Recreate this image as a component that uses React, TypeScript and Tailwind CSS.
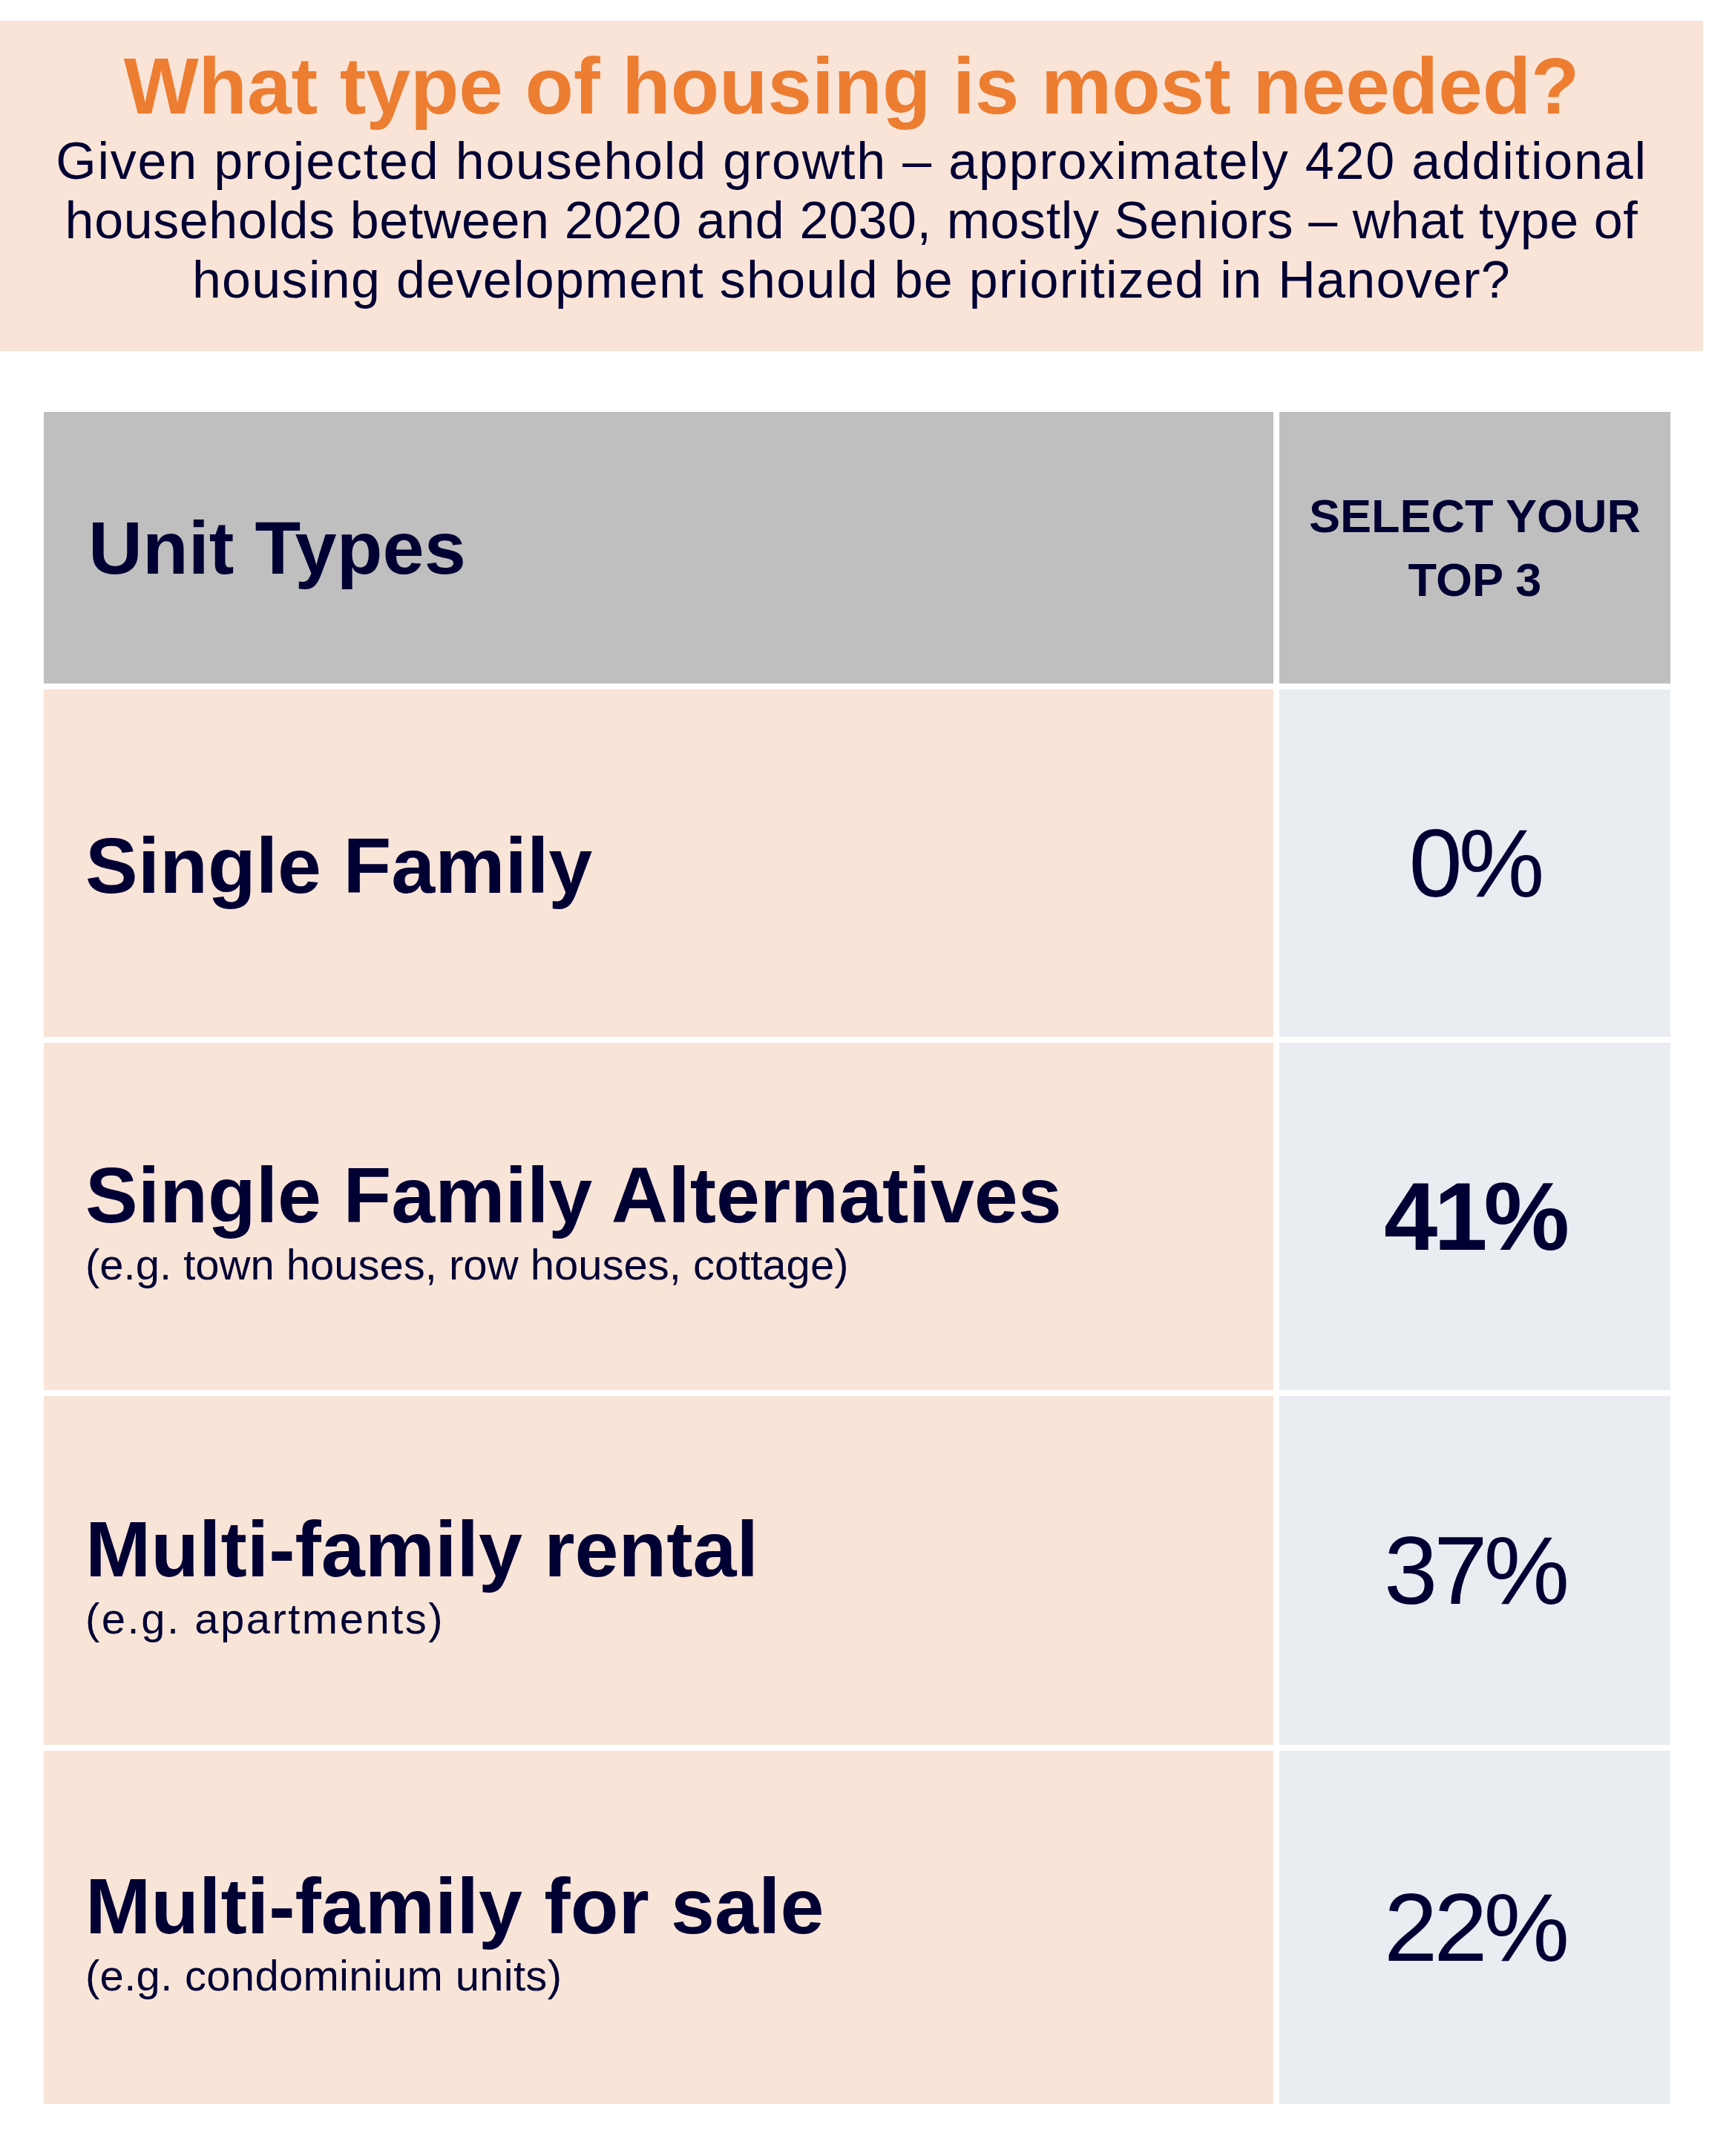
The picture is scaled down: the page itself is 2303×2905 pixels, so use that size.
import React from "react";

type Row = {
  title: string;
  sub: string | null;
  subCls: string;
  pct: string;
  bold: boolean;
  h: string;
};

const rows: Row[] = [
  { title: "Single Family", sub: null, subCls: "", pct: "0%", bold: false, h: "h-[468px]" },
  {
    title: "Single Family Alternatives",
    sub: "(e.g. town houses, row houses, cottage)",
    subCls: "tracking-[0px]",
    pct: "41%",
    bold: true,
    h: "h-[468px]",
  },
  {
    title: "Multi-family rental",
    sub: "(e.g. apartments)",
    subCls: "tracking-[2.5px]",
    pct: "37%",
    bold: false,
    h: "h-[470px]",
  },
  {
    title: "Multi-family for sale",
    sub: "(e.g. condominium units)",
    subCls: "tracking-[0.3px]",
    pct: "22%",
    bold: false,
    h: "h-[476px]",
  },
];

export default function App() {
  return (
    <div className="w-[2303px] h-[2905px] bg-white pt-[28px] font-['Liberation_Sans',Arial,sans-serif] text-[#000033]">
      <div className="w-[2295px] h-[445px] bg-[#F9E4D7] pt-[35px] text-center">
        <h1 className="text-[107px] leading-[107px] font-bold text-[#ED7D31]">
          What type of housing is most needed?
        </h1>
        <p className="mt-[7px] text-[70px] leading-[80px]">
          <span className="tracking-[1.8px]">Given projected household growth – approximately 420 additional</span>
          <br />
          <span className="tracking-[0.6px]">households between 2020 and 2030, mostly Seniors – what type of</span>
          <br />
          <span className="tracking-[1.3px]">housing development should be prioritized in Hanover?</span>
        </p>
      </div>

      <div className="ml-[59px] mt-[82px] w-[2192px] grid grid-cols-[1657px_527px] gap-[8px]">
        <div className="h-[366px] bg-[#BFBFBF] flex items-center pl-[60px]">
          <span className="text-[101px] leading-[106px] font-bold">Unit Types</span>
        </div>
        <div className="h-[366px] bg-[#BFBFBF] flex items-center justify-center text-center">
          <span className="text-[63px] leading-[86px] font-bold">
            SELECT YOUR
            <br />
            TOP 3
          </span>
        </div>

        {rows.map((r) => (
          <React.Fragment key={r.title}>
            <div
              className={`${r.h} bg-[#F9E4D8] flex flex-col justify-center pl-[56px] ${
                r.sub ? "pt-[14px]" : "pt-[6px]"
              }`}
            >
              <div className="text-[106px] leading-[106px] font-bold">{r.title}</div>
              {r.sub && <div className={`mt-[9px] text-[58px] leading-[64px] ${r.subCls}`}>{r.sub}</div>}
            </div>
            <div className={`${r.h} bg-[#E9ECF1] flex items-center justify-center`}>
              <span
                className={`text-[130px] leading-[130px] tracking-[-5px] ${
                  r.bold ? "font-bold" : "font-normal"
                }`}
              >
                {r.pct}
              </span>
            </div>
          </React.Fragment>
        ))}
      </div>
    </div>
  );
}
